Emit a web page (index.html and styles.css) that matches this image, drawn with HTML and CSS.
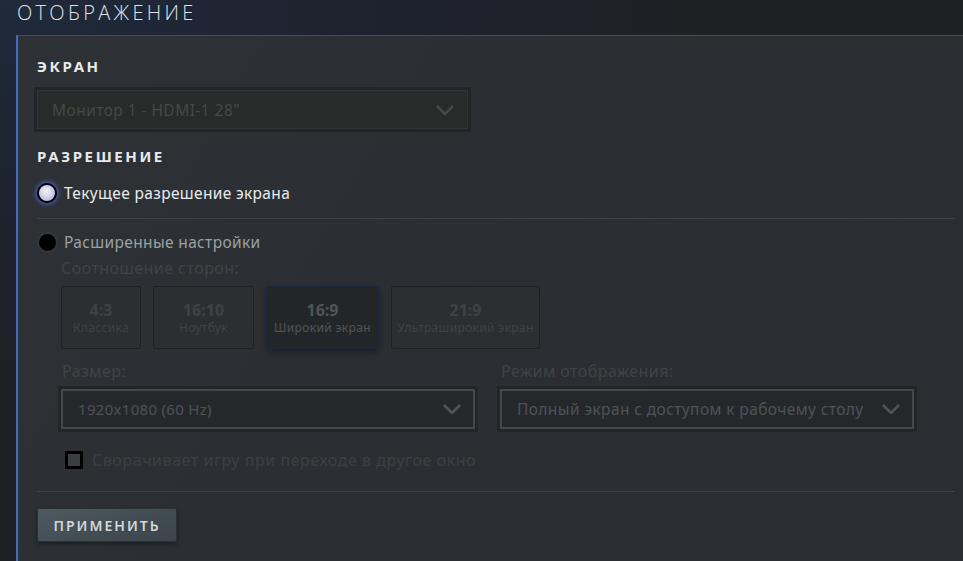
FILE: index.html
```html
<!DOCTYPE html>
<html lang="ru">
<head>
    <meta charset="UTF-8">
    <title>Отображение</title>
    <meta name="viewport" content="width=device-width, initial-scale=1.0">
    <link rel="stylesheet" href="styles.css">
</head>
<body>
    <h1 class="page-title">Отображение</h1>
    <div class="panel">
        <h2 class="section-title">Экран</h2>
        <div class="select select-monitor">
            <span class="select-value">Монитор 1 - HDMI-1 28"</span>
            <svg class="chevron" width="18" height="10" viewBox="0 0 18 10"><polyline points="1,1 9,9 17,1" /></svg>
        </div>

        <h2 class="section-title section-res">Разрешение</h2>
        <label class="radio-row">
            <span class="radio radio-on"></span>
            <span class="radio-text">Текущее разрешение экрана</span>
        </label>
        <div class="divider"></div>
        <label class="radio-row radio-row-off">
            <span class="radio"></span>
            <span class="radio-text">Расширенные настройки</span>
        </label>

        <div class="advanced">
            <div class="field-label">Соотношение сторон:</div>
            <div class="ratios">
                <div class="ratio r43"><b>4:3</b><span>Классика</span></div>
                <div class="ratio r1610"><b>16:10</b><span>Ноутбук</span></div>
                <div class="ratio r169 active"><b>16:9</b><span>Широкий экран</span></div>
                <div class="ratio r219"><b>21:9</b><span>Ультраширокий экран</span></div>
            </div>

            <div class="columns">
                <div class="column">
                    <div class="field-label">Размер:</div>
                    <div class="select">
                        <span class="select-value">1920x1080 (60 Hz)</span>
                        <svg class="chevron" width="18" height="10" viewBox="0 0 18 10"><polyline points="1,1 9,9 17,1" /></svg>
                    </div>
                </div>
                <div class="column">
                    <div class="field-label">Режим отображения:</div>
                    <div class="select">
                        <span class="select-value select-wide">Полный экран с доступом к рабочему столу</span>
                        <svg class="chevron" width="18" height="10" viewBox="0 0 18 10"><polyline points="1,1 9,9 17,1" /></svg>
                    </div>
                </div>
            </div>

            <label class="check-row">
                <span class="checkbox"></span>
                <span class="check-text">Сворачивает игру при переходе в другое окно</span>
            </label>
        </div>

        <div class="divider divider-bottom"></div>
        <button class="apply">Применить</button>
    </div>
</body>
</html>
```

FILE: styles.css
```css
html, body { height: 100%; }
body {
    margin: 0;
    padding-left: 16px;
    font-family: "Noto Sans", "Open Sans", sans-serif;
    background: radial-gradient(ellipse 700px 400px at 0 0, #1f2a3b 0%, #1e2330 45%, #1e2024 100%), #1e2024;
    overflow: hidden;
}

.page-title {
    margin: 0;
    height: 35px;
    line-height: 26px;
    font-family: "Open Sans", sans-serif;
    font-weight: 300;
    font-size: 20px;
    letter-spacing: 3.3px;
    text-transform: uppercase;
    color: #dfe3e8;
    padding-left: 1px;
}

.panel {
    width: 918px;
    height: calc(100% - 56px);
    padding: 20px 20px 0 19px;
    border-left: 2px solid #3c6ec4;
    border-top: 1px solid #4a4d51;
    border-right: 1px solid #46494c;
    background: linear-gradient(120deg, #2e3236 0%, #2b2f33 40%, #2a2d31 100%);
}

.section-title {
    margin: 0;
    height: 20px;
    line-height: 20px;
    font-size: 15px;
    font-weight: 700;
    letter-spacing: 2.6px;
    text-transform: uppercase;
    color: #e8eaec;
}
.section-res { margin-top: 14px; }

.select {
    display: flex;
    align-items: center;
    justify-content: space-between;
    box-sizing: border-box;
    height: 46px;
    padding: 0 14px 0 17px;
    border: 3px solid #222528;
    box-shadow: inset 0 0 0 2px #44484b;
    background: #25282b;
}
.select-monitor {
    width: 437px;
    height: 45px;
    margin: 11px 0 0 -3px;
    padding-left: 15px;
    box-shadow: inset 0 0 0 1px #313535;
    background: #272b2a;
}
.select-value { font-size: 15px; color: #4d5356; white-space: nowrap; letter-spacing: 0.3px; }
.select-value.select-wide { font-size: 15.5px; letter-spacing: 0.4px; }
.select-monitor .select-value { font-size: 15.5px; letter-spacing: 0.45px; color: #434a48; }
.chevron { flex: none; }
.chevron polyline { fill: none; stroke: #4f5557; stroke-width: 2.6; }
.select-monitor .chevron polyline { stroke: #434948; }

.radio-row {
    display: flex;
    align-items: center;
    gap: 6px;
    height: 24px;
    margin-top: 15px;
}
.radio {
    box-sizing: border-box;
    width: 21px;
    height: 21px;
    border-radius: 50%;
    background: #000;
    border: 2px solid #34383c;
}
.radio-on {
    width: 20px;
    height: 20px;
    margin: 0 1px 0 0;
    border: 2px solid #000;
    background: radial-gradient(circle at 45% 40%, #f2f3fa 0%, #c9cbe2 55%, #9a9dc0 100%);
    box-shadow: 0 0 4px 1px #4e5fd0;
}
.radio-text { font-size: 15.5px; letter-spacing: 0.35px; color: #e9ebed; }
.radio-row-off { margin-top: 11px; }
.radio-row-off .radio-text { color: #9aa0a5; }

.divider { height: 1px; background: #3e4246; margin-top: 13px; }
.divider-bottom { margin-top: 20px; }

.advanced { padding-left: 24px; }
.field-label {
    margin-top: 5px;
    height: 18px;
    line-height: 18px;
    font-size: 16px;
    letter-spacing: 0.45px;
    color: #3e4448;
}

.ratios { display: flex; gap: 12px; margin-top: 9px; }
.ratio {
    box-sizing: border-box;
    height: 63px;
    display: flex;
    flex-direction: column;
    align-items: center;
    justify-content: center;
    border: 1px solid #1f2225;
    border-radius: 2px;
    background: #2b2f32;
    color: #3d4246;
}
.ratio b { font-size: 16px; line-height: 20px; }
.ratio span { font-size: 12px; letter-spacing: 0.35px; line-height: 16px; }
.r43 { width: 80px; }
.r1610 { width: 101px; }
.r169 { width: 113px; }
.r219 { width: 149px; }
.ratio.active {
    background: #232629;
    border-color: #1d2a3d;
    box-shadow: 0 3px 6px rgba(0, 0, 0, 0.35);
    color: #4f5559;
}

.columns { display: flex; gap: 19px; margin-top: 13px; margin-left: -3px; }
.column { width: 420px; }
.column .field-label { margin: 0 0 6px 4px; }

.check-row { display: flex; align-items: center; gap: 9px; height: 22px; margin-top: 17px; margin-left: 4px; }
.checkbox {
    box-sizing: border-box;
    width: 18px;
    height: 18px;
    border: 3px solid #000;
    background: #3a3e41;
}
.check-text { font-size: 16px; letter-spacing: 0.55px; color: #3b4044; }

.apply {
    display: block;
    margin-top: 16px;
    width: 140px;
    height: 34px;
    border: 1px solid #2b3236;
    border-radius: 2px;
    background: linear-gradient(160deg, #4e5a61 0%, #434d54 50%, #3c454b 100%);
    box-shadow: 0 2px 4px rgba(0, 0, 0, 0.4);
    font-family: "Noto Sans", sans-serif;
    font-size: 14px;
    font-weight: 600;
    letter-spacing: 2px;
    text-transform: uppercase;
    color: #d3d7d9;
    padding: 0;
}
```
